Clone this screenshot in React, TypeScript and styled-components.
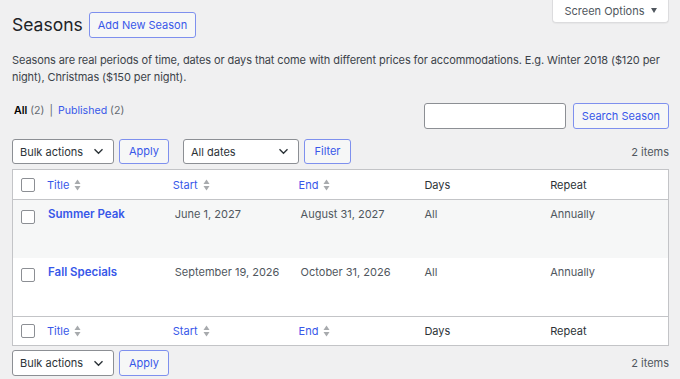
import React from 'react';
import styled, { createGlobalStyle } from 'styled-components';

const GlobalStyle = createGlobalStyle`
  html, body {
    margin: 0;
    padding: 0;
    background: #f0f0f1;
    overflow: hidden;
  }
  body {
    font-family: Inter, "Open Sans", "Liberation Sans", sans-serif;
    font-size: 11px;
    color: #3c434a;
  }
  * { box-sizing: border-box; }
`;

const accent = '#3858e9';

const Wrap = styled.div`
  padding: 0 11px 0 12px;
`;

const TopRow = styled.div`
  display: flex;
  justify-content: space-between;
  align-items: flex-start;
`;

const HeadGroup = styled.div`
  display: flex;
  align-items: center;
  gap: 6px;
  margin-top: 12px;
`;

const Title = styled.h1`
  margin: 0;
  font-size: 17.5px;
  font-weight: 400;
  color: #1d2327;
  line-height: 26px;
`;

const Button = styled.button<{ $w?: number; $h?: number }>`
  height: ${(p) => p.$h || 25}px;
  padding: 0 ${(p) => (p.$w ? 0 : 8)}px;
  width: ${(p) => (p.$w ? `${p.$w}px` : 'auto')};
  border: 1px solid #7e90ee;
  border-radius: 3px;
  background: #f6f7f7;
  color: ${accent};
  font: inherit;
  font-size: 11px;
  line-height: 1;
  cursor: pointer;
  flex: none;
`;

const ScreenOptions = styled.div`
  width: 117px;
  height: 23px;
  background: #fff;
  border: 1px solid #dcdcde;
  border-top: none;
  border-radius: 0 0 4px 4px;
  box-shadow: 0 1px 1px rgba(0, 0, 0, 0.04);
  color: #50575e;
  display: flex;
  align-items: center;
  justify-content: center;
  gap: 6px;
  padding-bottom: 1px;
`;

const Arrow = styled.span`
  width: 0;
  height: 0;
  border-left: 3.5px solid transparent;
  border-right: 3.5px solid transparent;
  border-top: 5px solid #50575e;
`;

const Desc = styled.p`
  margin: 14px 0 0;
  line-height: 17px;
  letter-spacing: -0.1px;
  color: #3c434a;
`;

const FilterRow = styled.div`
  display: flex;
  justify-content: space-between;
  align-items: flex-start;
  margin-top: 17px;
`;

const SubSub = styled.div`
  margin: 0 0 0 2px;
  line-height: 16px;
  font-size: 10.6px;
  color: #646970;
`;

const Sep = styled.span`
  margin: 0 5px;
`;

const Current = styled.span`
  color: #000;
  font-weight: 600;
`;

const Link = styled.a<{ $bold?: boolean }>`
  color: ${accent};
  text-decoration: none;
  font-weight: ${(p) => (p.$bold ? 600 : 400)};
  font-size: ${(p) => (p.$bold ? '11.5px' : 'inherit')};
`;

const SearchBox = styled.div`
  display: flex;
  gap: 7px;
`;

const Input = styled.input`
  width: 142px;
  height: 26px;
  border: 1px solid #8c8f94;
  border-radius: 3px;
  background: #fff;
  font: inherit;
`;

const TableNav = styled.div<{ $top?: boolean }>`
  display: flex;
  align-items: center;
  justify-content: space-between;
  margin: ${(p) => (p.$top ? '10px 0 5px' : '4px 0 0')};
`;

const Actions = styled.div`
  display: flex;
  align-items: center;
`;

const Group = styled.div`
  display: flex;
  align-items: center;
  gap: 5px;
  margin-right: 14px;
`;

const Select = styled.div<{ $w: number; $h?: number }>`
  width: ${(p) => p.$w}px;
  height: ${(p) => p.$h || 25}px;
  background: #fff;
  border: 1px solid #8c8f94;
  border-radius: 3px;
  display: flex;
  align-items: center;
  justify-content: space-between;
  padding: 0 9px 0 7px;
  color: #2c3338;
`;

const Count = styled.span`
  color: #50575e;
`;

const Table = styled.div`
  background: #fff;
  border: 1px solid #c3c4c7;
`;

const Row = styled.div<{ $kind: 'head' | 'foot' | 'body'; $alt?: boolean }>`
  display: grid;
  grid-template-columns: 26px repeat(5, 1fr);
  height: ${(p) => (p.$kind === 'body' ? 58 : p.$kind === 'head' ? 30 : 29)}px;
  align-items: ${(p) => (p.$kind === 'body' ? 'start' : 'center')};
  background: ${(p) => (p.$alt ? '#f6f7f7' : '#fff')};
  border-bottom: ${(p) => (p.$kind === 'head' ? '1px solid #c3c4c7' : 'none')};
  border-top: ${(p) => (p.$kind === 'foot' ? '1px solid #c3c4c7' : 'none')};
`;

const CheckCell = styled.div<{ $body?: boolean }>`
  padding-left: 8px;
  padding-top: ${(p) => (p.$body ? 10 : 0)}px;
  display: flex;
`;

const Check = styled.span`
  width: 14px;
  height: 14px;
  border: 1px solid #8c8f94;
  border-radius: 2px;
  background: #fff;
`;

const HeadCell = styled.div`
  padding-left: 8px;
  display: flex;
  align-items: center;
  gap: 5px;
  color: #2c3338;
  line-height: 16px;
`;

const Cell = styled.div<{ $pad?: number }>`
  padding: 6px 0 0 ${(p) => p.$pad ?? 9}px;
  line-height: 16px;
  color: #50575e;
`;

const Sort = () => (
  <svg width="7" height="12" viewBox="0 0 7 12">
    <path d="M3.5 0.5 L6.5 5 L0.5 5 Z" fill="#a7aaad" />
    <path d="M0.5 7 L6.5 7 L3.5 11.5 Z" fill="#a7aaad" />
  </svg>
);

const Chevron = () => (
  <svg width="11" height="7" viewBox="0 0 11 7">
    <path d="M1.5 1.2 L5.5 5.2 L9.5 1.2" fill="none" stroke="#2c3338" strokeWidth="1.4" />
  </svg>
);

const columns = [
  { label: 'Title', sortable: true },
  { label: 'Start', sortable: true },
  { label: 'End', sortable: true },
  { label: 'Days', sortable: false },
  { label: 'Repeat', sortable: false },
];

const seasons = [
  { title: 'Summer Peak', start: 'June 1, 2027', end: 'August 31, 2027', days: 'All', repeat: 'Annually' },
  { title: 'Fall Specials', start: 'September 19, 2026', end: 'October 31, 2026', days: 'All', repeat: 'Annually' },
];

const HeaderRow: React.FC<{ kind: 'head' | 'foot' }> = ({ kind }) => (
  <Row $kind={kind}>
    <CheckCell>
      <Check />
    </CheckCell>
    {columns.map((c) => (
      <HeadCell key={c.label}>
        {c.sortable ? (
          <>
            <Link>{c.label}</Link>
            <Sort />
          </>
        ) : (
          c.label
        )}
      </HeadCell>
    ))}
  </Row>
);

const BulkActions: React.FC<{ h?: number }> = ({ h }) => (
  <Group>
    <Select $w={102} $h={h}>
      Bulk actions <Chevron />
    </Select>
    <Button $w={50} $h={h}>Apply</Button>
  </Group>
);

export default function App() {
  return (
    <>
      <GlobalStyle />
      <Wrap>
        <TopRow>
          <HeadGroup>
            <Title>Seasons</Title>
            <Button $h={26}>Add New Season</Button>
          </HeadGroup>
          <ScreenOptions>
            Screen Options <Arrow />
          </ScreenOptions>
        </TopRow>

        <Desc>
          Seasons are real periods of time, dates or days that come with different prices for accommodations. E.g.
          Winter 2018 ($120 per night), Christmas ($150 per night).
        </Desc>

        <FilterRow>
          <SubSub>
            <Current>All</Current> (2)<Sep>|</Sep><Link>Published</Link> (2)
          </SubSub>
          <SearchBox>
            <Input />
            <Button $w={96} $h={26}>Search Season</Button>
          </SearchBox>
        </FilterRow>

        <TableNav $top>
          <Actions>
            <BulkActions />
            <Group>
              <Select $w={116}>
                All dates <Chevron />
              </Select>
              <Button $w={47}>Filter</Button>
            </Group>
          </Actions>
          <Count>2 items</Count>
        </TableNav>

        <Table>
          <HeaderRow kind="head" />
          {seasons.map((s, i) => (
            <Row key={s.title} $kind="body" $alt={i === 0}>
              <CheckCell $body>
                <Check />
              </CheckCell>
              <Cell>
                <Link $bold>{s.title}</Link>
              </Cell>
              <Cell $pad={10}>{s.start}</Cell>
              <Cell $pad={10}>{s.end}</Cell>
              <Cell $pad={8}>{s.days}</Cell>
              <Cell $pad={8}>{s.repeat}</Cell>
            </Row>
          ))}
          <HeaderRow kind="foot" />
        </Table>

        <TableNav>
          <Actions>
            <BulkActions h={26} />
          </Actions>
          <Count>2 items</Count>
        </TableNav>
      </Wrap>
    </>
  );
}
